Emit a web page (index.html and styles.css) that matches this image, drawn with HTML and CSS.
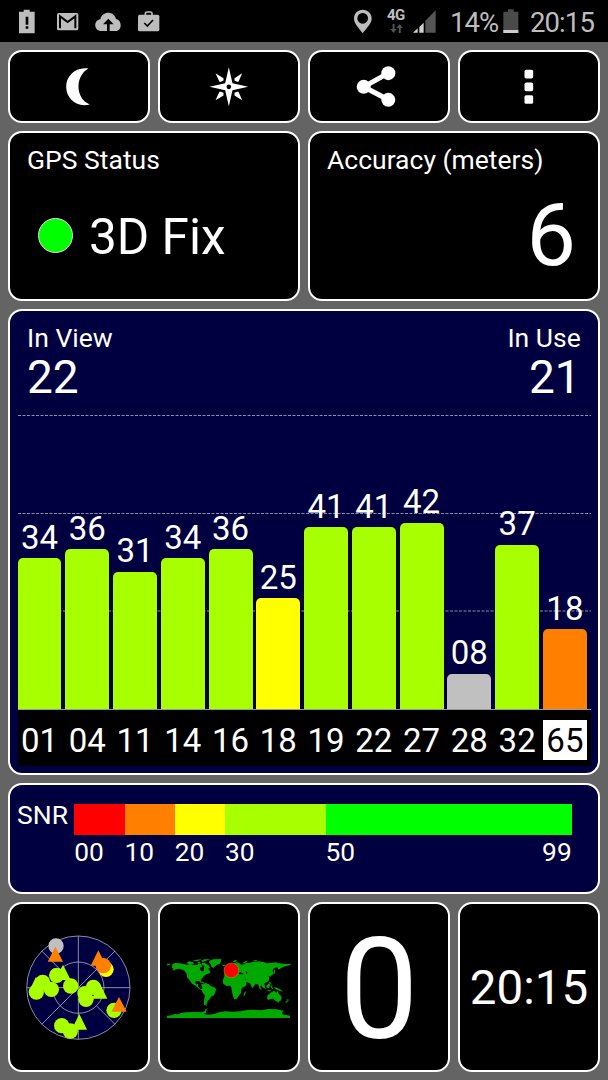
FILE: index.html
```html
<!DOCTYPE html>
<html lang="en">
<head>
  <meta charset="UTF-8">
  <meta name="viewport" content="width=device-width, initial-scale=1.0">
  <title>GPS Test</title>
  <link rel="stylesheet" href="styles.css">
</head>
<body>
  <header class="status-bar">
    <svg class="w-battery" viewBox="57 0 48 126"><path fill="#bdbdbd" d="M57 35h14v-6h18v6h15v65H57z"/><path fill="#000" d="M77 50h8v24h-8zM77 79h8v7h-8z"/></svg>
    <svg class="w-mail" viewBox="171 0 66 126"><rect x="171" y="39" width="64" height="52" rx="5" fill="#bdbdbd"/><path d="M180 85V49L203 66L226 49V85" fill="none" stroke="#000" stroke-width="6"/></svg>
    <svg class="w-cloud" viewBox="285 0 78 126"><path fill="#bdbdbd" d="M305 93C279 93 281 60 301 58C306 33 341 31 348 57C368 61 366 93 347 93z"/><path fill="#000" d="M325 56l16 17h-12v20h-8V73h-12z"/></svg>
    <svg class="w-case" viewBox="411 0 69 126"><rect x="414" y="44" width="64" height="50" rx="5" fill="#bdbdbd"/><path d="M436 46v-5q0-5 5-5h10q5 0 5 5v5" fill="none" stroke="#bdbdbd" stroke-width="5"/><path d="M433 69l9 9l17-18" fill="none" stroke="#000" stroke-width="5"/></svg>
    <div class="status-right">
      <svg class="w-pin" viewBox="144 0 54 126"><path fill="#bdbdbd" fill-rule="evenodd" d="M170 29c15 0 27 11 27 27c0 15-15 27-27 44c-12-17-26-29-26-44c0-16 11-27 26-27zm0 10a16 16 0 1 0 .1 0z"/></svg>
      <div class="network">
        <span>4G</span>
        <svg viewBox="0 0 40 27"><path fill="#555" d="M8 0h6v15h6L11 27L1 15h7zM27 27h6V12h6L30 0L20 12h7z"/></svg>
      </div>
      <svg class="w-signal" viewBox="320 0 69 126"><path fill="#555" d="M357 98V62L388 31V98z"/><path fill="#d0d0d0" d="M320 98l14-13v13zM339 98V81l13-13v30z"/></svg>
      <span class="percent">14%</span>
      <svg class="w-battery" viewBox="596 0 48 126"><path fill="#4a4a4a" d="M597 35h14v-7h17v7h14v64h-45z"/><path fill="#ccc" d="M597 90h45v9h-45z"/></svg>
      <span class="clock">20:15</span>
    </div>
  </header>

  <main class="dashboard">
    <button class="panel btn" aria-label="Night mode">
      <svg viewBox="156.5 179.5 160 160"><path fill="#fff" d="M266 205C226 199 199 228 199 260C199 296 232 324 270 313C225 294 226 226 266 205z"/></svg>
    </button>
    <button class="panel btn" aria-label="Compass">
      <svg viewBox="605.5 179.5 160 160">
        <path fill="#fff" d="M686 201L697 249L744 260L697 270L686 318L675 270L628 260L675 249z"/>
        <path fill="#fff" d="M646 219l24 15v7l-8 4h-4zM726 219l-23 15v7l8 4h4zM646 300l24-14v-8l-8-3h-4zM726 300l-23-14v-8l8-3h4z"/>
        <circle cx="686" cy="260" r="7"/>
      </svg>
    </button>
    <button class="panel btn" aria-label="Share">
      <svg viewBox="145 179.5 160 160"><path d="M254 219L180 260L254 299" fill="none" stroke="#fff" stroke-width="15"/><circle cx="254" cy="219" r="21" fill="#fff"/><circle cx="180" cy="260" r="21" fill="#fff"/><circle cx="254" cy="299" r="21" fill="#fff"/></svg>
    </button>
    <button class="panel btn" aria-label="Menu">
      <svg viewBox="594.5 179.5 160 160" fill="#fff"><rect x="662" y="209" width="26" height="26" rx="5"/><rect x="662" y="247" width="26" height="26" rx="5"/><rect x="662" y="285" width="26" height="26" rx="5"/></svg>
    </button>

    <section class="panel info">
      <h2>GPS Status</h2>
      <div class="fix"><span class="dot"></span>3D Fix</div>
    </section>
    <section class="panel info">
      <h2>Accuracy (meters)</h2>
      <div class="accuracy">6</div>
    </section>

    <section class="panel satellites">
      <div class="counts">
        <div><h2>In View</h2><p>22</p></div>
        <div class="in-use"><h2>In Use</h2><p>21</p></div>
      </div>
      <div class="plot">
        <svg class="grid-lines" viewBox="0 0 573 309"><path d="M0 15.5H573M0 113.5H573M0 211H573"/></svg>
        <div class="bar" style="--snr: 34"><span>34</span></div>
        <div class="bar" style="--snr: 36"><span>36</span></div>
        <div class="bar" style="--snr: 31"><span>31</span></div>
        <div class="bar" style="--snr: 34"><span>34</span></div>
        <div class="bar" style="--snr: 36"><span>36</span></div>
        <div class="bar medium" style="--snr: 25"><span>25</span></div>
        <div class="bar" style="--snr: 41"><span>41</span></div>
        <div class="bar" style="--snr: 41"><span>41</span></div>
        <div class="bar" style="--snr: 42"><span>42</span></div>
        <div class="bar unused" style="--snr: 8"><span>08</span></div>
        <div class="bar" style="--snr: 37"><span>37</span></div>
        <div class="bar weak" style="--snr: 18"><span>18</span></div>
      </div>
      <div class="ids">
        <span>01</span><span>04</span><span>11</span><span>14</span><span>16</span><span>18</span>
        <span>19</span><span>22</span><span>27</span><span>28</span><span>32</span><span class="glonass">65</span>
      </div>
    </section>

    <section class="panel snr">
      <h2>SNR</h2>
      <div class="scale">
        <i class="red"></i><i class="orange"></i><i class="yellow"></i><i class="lime"></i><i class="green"></i>
        <span>00</span><span>10</span><span>20</span><span>30</span><span class="last"><b>50</b><b>99</b></span>
      </div>
    </section>

    <section class="panel tile">
      <svg class="sky" viewBox="50 43 314 316">
        <circle cx="207" cy="201" r="155" fill="#000040"/>
        <g fill="none" stroke="#a8a8b4" stroke-width="2.5">
          <circle cx="207" cy="201" r="155"/><circle cx="207" cy="201" r="77"/>
          <path d="M207 46V356M52 201H362M97 91L152 146M262 256L317 311M97 311L317 91"/>
        </g>
        <circle cx="140" cy="76" r="23" fill="#c0c0c0"/>
        <circle cx="290" cy="146" r="23" fill="#ff0"/>
        <g fill="#a8ff00">
          <circle cx="142" cy="164" r="23"/><circle cx="100" cy="185" r="23"/><circle cx="81" cy="214" r="23"/>
          <circle cx="126" cy="206" r="23"/><circle cx="184" cy="196" r="23"/><circle cx="226" cy="218" r="22"/>
          <circle cx="252" cy="200" r="23"/><circle cx="230" cy="236" r="23"/><circle cx="314" cy="269" r="23"/>
          <circle cx="157" cy="315" r="23"/><circle cx="183" cy="331" r="23"/>
          <path d="M161 132l23 46h-46zM80 168l23 46H58zM271 187l23 47h-46zM210 280l23 47h-46z"/>
        </g>
        <g fill="#ff8000"><circle cx="282" cy="135" r="23"/><path d="M138 78l23 45h-46zM267 89l23 46h-46zM329 229l23 44h-46z"/></g>
      </svg>
    </section>
    <section class="panel tile">
      <svg class="world" viewBox="36 48 370 192">
        <g fill="#00a800">
          <path d="M36 71h10l-2 5h-8zM52 73l8-4 16 1 12 3 12 1 3-3 8 3 16 1 5-5 7 2 2 8-6 3 1 7 8 5 3-8 1-9 6 1 6 8 7 10-4 3-8 2-8 6-6 7-3 5-1 8-4-5h-10l-3 6 5 4 5-1-1 6 7 8 7 2-2 3-9-5-9-8-12-7-7-10-8-9-1-11-8-10-14-5-10 2-10 4 2-6-4-3z"/>
          <path d="M96 67l7-3 9 2 7 4-8 3-12-1zM112 62l13-3 14-1-4 3-10 3zM138 62l10-4 18-1-14 6-9 3zM126 67l6-2 5 3-5 3zM141 68l9 1 10 6 5 7-3 4-7-2-7-7-9-2zM148 91l10 1 6 7-7 2z"/>
          <path d="M163 62l12-4 24-1-1 8-4 7-9 3-10 9-5-3-3-8-5-6zM202 75l7-1 2 3-7 2zM132 124l14 2 2 4-14-3z"/>
          <path d="M138 134l6-3 8-2 9 3 7 7 8 2 8 6-3 9-4 10-9 4-4 8-6 4-2 7-2 5 2 4-7-4-2-10 3-18-7-8-3-9 2-8z"/>
          <path d="M207 112l7-5 13-1 14 5 14 1 7 13 8 6-4 8-7 9-1 11-7 9-5 8-8 2-4-9-3-14-2-13-3-5-12 1-9-7-2-9zM268 158l4-5v7l-4 8-3-2z"/>
          <path d="M208 107v-8l8-1-2-6 9-6 7-4v-7l13-8 9 1 7 6 9-1 6-5 8 1 15-4 15-1 13 2 12 4 17-2 19 2 18 2 16-1v4l-13 3-8 2-7 4-8 5-4-7-9 2-5 7 2 9-6 6-7 3 1 9-6 8-9 4 2 9-5 5-4-4-2-5-3 5 4 10-6-4-4-12-8-3-7 10-4 4-4-13-6-4-8-1 2 9-10 6-6-8-6-10 2-5-10-1-3-5-7 4-6-8-6-1-8 3-7 3z"/>
          <path d="M208 86l5-8 5 8-3 5-8 1zM232 65l8-5 8 2-9 5zM262 70l9-6 8-2-4 4-8 5zM292 63l11-3 5 3-10 1zM354 67l10-1 3 3zM345 107l6-6 6-4 1-10 3 5-2 8-9 6-4 4zM338 120l4-4v7z"/>
          <path d="M319 129l6 4 6 10 3 6-7-5-7-11zM334 137l8-7 4 5-4 10-7-2zM347 138l6-3-2 5 4 6-4 1zM341 125l5 2 4 9-5-4zM333 150l12 1 7 1-10 2zM357 141l9 2 13 7 4 5-10-3-8-3-5-3z"/>
          <path d="M338 165l8-5 5-5 8-2 5 5 4-6 3 9 8 8 1 7-4 7-9 2-6-3-5-6-9 1-8 3-3-6zM367 185l5-1-2 5zM397 177l5 2-3 5-4 4-5-1 7-5zM148 186h6l-1 9h-6zM299 125l4 2-1 4z"/>
          <path d="M36 227l14-1 9-4 12 1 5-4 17-2 27-1 19 1 10-3 2-5 7-5-4 8v6l-8 4 14 2 17-2 16-5 18-3 22 1 24-1 20-4 19-1 22 2 22-4 26 1 20 4-5 6 2 5 22 4v7H36z"/>
        </g>
        <path d="M251 99l5-2 10 4-3 2h-11zM273 93l4 3-1 7-3-4zM266 110l9 10-2 1z"/>
        <circle cx="229" cy="91" r="22" fill="#f00" stroke="#bda000" stroke-width="1.5"/>
      </svg>
    </section>
    <section class="panel tile speed">0</section>
    <section class="panel tile time">20:15</section>
  </main>
</body>
</html>
```
FILE: styles.css
```css
* {
  margin: 0;
  padding: 0;
  box-sizing: border-box;
}

body {
  width: 608px;
  height: 1080px;
  background: #646464;
  color: #fff;
  font-family: Roboto, "Liberation Sans", sans-serif;
  overflow: hidden;
}

svg {
  display: block;
  flex: none;
}

h2 {
  font-size: 26.5px;
  font-weight: 400;
  line-height: 30px;
}

/* Status bar */
.status-bar {
  display: flex;
  height: 42px;
  padding: 0 13px 0 19px;
  background: #000;
  color: #bdbdbd;
}

.status-bar > svg,
.status-right > svg {
  height: 42px;
}

.w-battery {
  width: 16px;
}

.w-mail {
  width: 22px;
  margin-left: 22px;
}

.w-cloud {
  width: 26px;
  margin-left: 16px;
}

.w-case {
  width: 23px;
  margin-left: 16px;
}

.status-right {
  display: flex;
  margin-left: auto;
  font-size: 27.5px;
  letter-spacing: -0.9px;
  line-height: 46px;
}

.w-pin {
  width: 18px;
}

.network {
  width: 20px;
  margin-left: 15px;
  padding-top: 8px;
  font-size: 15px;
  font-weight: 700;
  letter-spacing: -0.5px;
  line-height: 15px;
}

.network span {
  display: block;
}

.network svg {
  width: 13px;
  height: 9px;
  margin: 1px 0 0 3px;
}

.w-signal {
  width: 23px;
  margin-left: 6px;
}

.percent {
  width: 53px;
  margin-left: 14px;
}

.clock {
  width: 65px;
  margin-left: 11px;
}

/* Panels */
.dashboard {
  display: grid;
  grid-template-columns: repeat(4, 142px);
  grid-template-rows: 73px 170px 466px 111px 170px;
  gap: 8px;
  padding: 8px;
}

.panel {
  background: #000;
  border: 2px solid #fff;
  border-radius: 14px;
}

.btn {
  display: flex;
  align-items: center;
  justify-content: center;
}

.btn svg {
  width: 53.33px;
  height: 53.33px;
}

.info {
  grid-column: span 2;
  padding: 12px 22px 0 17px;
}

.fix,
.accuracy {
  display: flex;
  align-items: center;
  height: 59px;
  margin-top: 32px;
  font-size: 49.5px;
}

.dot {
  width: 35px;
  height: 35px;
  margin: -3px 16px 0 11px;
  background: #0f0;
  border: 1px solid #ddd;
  border-radius: 50%;
}

.accuracy {
  justify-content: flex-end;
  height: 54px;
  font-size: 88px;
}

/* Satellite chart */
.satellites,
.snr {
  grid-column: span 4;
  background: #000040;
}

.satellites {
  padding: 0 7.3px 0 7.5px;
}

.counts {
  display: flex;
  justify-content: space-between;
  height: 89px;
  padding: 12px 10px 0 9.5px;
}

.counts p {
  margin-top: 1px;
  font-size: 46px;
  line-height: 46px;
}

.in-use {
  text-align: right;
}

.plot {
  position: relative;
  display: grid;
  grid-template-columns: repeat(12, 1fr);
  align-items: end;
  height: 309px;
}

.grid-lines {
  position: absolute;
  inset: 0;
  width: 573px;
  height: 309px;
  fill: none;
  stroke: #8c8ca6;
  stroke-dasharray: 3 1.5;
}

.bar {
  position: relative;
  height: calc(var(--snr) * 4.435px);
  margin-right: 3.8px;
  background: #a8ff00;
  border-radius: 5px 5px 0 0;
}

.bar span {
  display: block;
  margin-top: -37.5px;
  font-size: 33px;
  line-height: 33px;
  text-align: center;
}

.bar.medium {
  background: #ff0;
}

.bar.weak {
  background: #ff8000;
}

.bar.unused {
  background: #c0c0c0;
}

.ids {
  display: grid;
  grid-template-columns: repeat(12, 1fr);
  height: 57px;
  padding-top: 10px;
  background: #000;
  border-top: 1px solid #999;
}

.ids span {
  height: 40px;
  margin-right: 3.8px;
  font-size: 33px;
  line-height: 42px;
  text-align: center;
}

.ids .glonass {
  background: #fff;
  color: #000;
}

/* SNR legend */
.snr {
  display: flex;
  padding: 19px 0 0 7px;
}

.snr h2 {
  width: 57.3px;
  line-height: 21px;
}

.scale {
  display: grid;
  grid-template-columns: 10fr 10fr 10fr 20fr 49fr;
  grid-template-rows: 31px 37px;
  width: 497.4px;
}

.red { background: #f00; }
.orange { background: #ff8000; }
.yellow { background: #ff0; }
.lime { background: #a8ff00; }
.green { background: #0f0; }

.scale span {
  font-size: 26.3px;
  line-height: 35px;
}

.scale .last {
  display: flex;
  justify-content: space-between;
}

.scale b {
  font-weight: 400;
}

/* Bottom tiles */
.tile {
  display: flex;
  align-items: center;
  justify-content: center;
}

.sky {
  width: 104.7px;
  height: 105.3px;
  margin: 1px 1px 0 0;
}

.world {
  width: 123.3px;
  height: 64px;
  margin-top: 2px;
}

.speed {
  padding-top: 5px;
  font-size: 141px;
  line-height: 1;
}

.time {
  padding-top: 1px;
  font-size: 47.5px;
}
```
